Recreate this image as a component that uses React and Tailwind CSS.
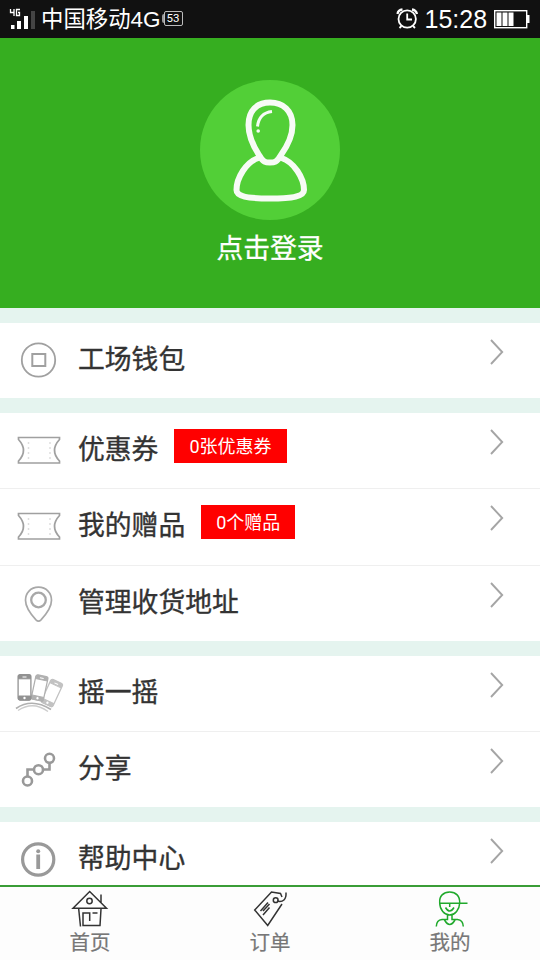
import React from "react";

const iconBox = "h-[75px] w-[78px] shrink-0";

const CoinIcon = () => (
  <svg className={iconBox} viewBox="0 0 78 75" fill="none" stroke="#a0a0a0">
    <circle cx="38.5" cy="37" r="16.7" strokeWidth="1.8" />
    <rect x="32.3" y="31" width="13" height="12" strokeWidth="2" />
  </svg>
);

const TicketIcon = () => (
  <svg className={iconBox} viewBox="0 0 78 75" fill="none" stroke="#a0a0a0">
    <path d="M18.5 24.5H59.5V26.5Q49.5 37.5 59.5 48V50H18.5V48Q28.5 37.5 18.5 26.5Z" strokeWidth="1.7" />
    <path d="M28.5 29V46M50 29V46" stroke="#dedede" strokeWidth="1.5" strokeDasharray="2 3" />
  </svg>
);

const PinIcon = () => (
  <svg className={iconBox} viewBox="0 0 78 75" fill="none" stroke="#a8a8a8">
    <path d="M38.5 21.2C30.5 21.2 25.5 27.2 25.5 34.2C25.5 41.5 32 49.5 36 53.8Q38.5 56.3 41 53.8C45 49.5 51.5 41.5 51.5 34.2C51.5 27.2 46.5 21.2 38.5 21.2Z" strokeWidth="1.7" />
    <circle cx="38.5" cy="34" r="7.3" strokeWidth="2.3" />
  </svg>
);

const Phone = () => (
  <>
    <rect x="0.6" y="0.6" width="12.8" height="25.4" rx="2" fill="#fff" strokeWidth="1.3" />
    <path d="M1 4.8V2Q1 1 2 1H12Q13 1 13 2V4.800ZM1 22H13V25Q13 26 12 26H2Q1 26 1 25Z" fill="currentColor" />
    <path d="M5 3H9" stroke="#fff" />
    <circle cx="7" cy="24" r="1.2" fill="#fff" stroke="none" />
  </>
);

const ShakeIcon = () => (
  <svg className={iconBox} viewBox="0 0 78 75" fill="none" stroke="currentColor">
    <g className="text-[#c2c2c2]" transform="translate(51.2 22) rotate(25)"><Phone /></g>
    <g className="text-[#b0b0b0]" transform="translate(35.8 17.8) rotate(12) scale(0.96 0.98)"><Phone /></g>
    <g className="text-[#929292]" transform="translate(17.5 18)"><Phone /></g>
    <path d="M16 52.5Q32 41.5 51 53.5" stroke="#b0b0b0" strokeWidth="1.7" />
    <path d="M18 54.5Q33 44.500 48 55.500" stroke="#ccc" strokeWidth="1.3" />
  </svg>
);

const ShareIcon = () => (
  <svg className={iconBox} viewBox="0 0 78 75" fill="none" stroke="#999" strokeWidth="2.6">
    <path d="M27.5 45V37.500H34M43 37.500H49.500V31" />
    <circle cx="27.5" cy="49" r="4.500" />
    <circle cx="38.500" cy="37.700" r="4.500" />
    <circle cx="49.500" cy="26.300" r="4.500" />
  </svg>
);

const InfoIcon = () => (
  <svg className={iconBox} viewBox="0 0 78 75" fill="none" stroke="#999">
    <circle cx="38.2" cy="37.5" r="15.6" strokeWidth="3.2" />
    <path d="M38.200 32.500V47" strokeWidth="3.800" />
    <circle cx="38.200" cy="29.300" r="2" fill="#999" stroke="none" />
  </svg>
);

const Chevron = () => (
  <svg className="ml-auto h-[75px] w-[52px] shrink-0" viewBox="0 0 52 75" fill="none" stroke="#a5a5a5" strokeWidth="1.9">
    <path d="M3 17L14.200 29L3 41" />
  </svg>
);

function Row({ icon, label, badge, divider }) {
  return (
    <div className={divider ? "h-[76.5px] border-b-[1.5px] border-[#efefef] bg-white" : "h-[75px] bg-white"}>
      <div className="flex">
        {icon}
        <span className="pt-[17px] text-[26.8px] leading-[40px] text-[#333] [-webkit-text-stroke:0.35px_#333]">{label}</span>
        {badge && (
          <span className="mt-4 ml-[16px] h-[34px] bg-[#ff0000] px-[15px] text-[18px] leading-[35px] text-white">{badge}</span>
        )}
        <Chevron />
      </div>
    </div>
  );
}

const tabIcon = "h-[38px] w-10 overflow-visible";

const HomeIcon = () => (
  <svg className={tabIcon} viewBox="0 0 40 38" fill="none" stroke="#333" strokeWidth="1.5">
    <path d="M3 21.300L19.700 4.500L36.500 21.300ZM31 7.500V15.500M8.700 22L10.500 39.500M31 22L30 38.500H13V26H19.700V34M22.500 26H27.500" />
    <circle cx="19.500" cy="14" r="2.700" />
  </svg>
);

const TagIcon = () => (
  <svg className={tabIcon} viewBox="0 0 40 38" fill="none" stroke="#333" strokeWidth="1.5">
    <path d="M32 17L17.700 38.500L4.700 23L21.500 5L30.500 6.500L32 10" />
    <circle cx="25.700" cy="13.200" r="2.400" />
    <path d="M27 14C33 15.500 36.500 12.500 36 5.500M18 15.500L10.500 24M19.500 20.500L13 28M19.500 17L13 24" />
  </svg>
);

const PersonIcon = () => (
  <svg className={tabIcon} viewBox="0 0 40 38" fill="none" stroke="#20a92c" strokeWidth="1.5">
    <path d="M9.700 16C9 9 13.500 5 19.700 5S30 9 29.700 16C29.500 22.500 25 28 19.700 28S9.800 22.500 9.700 16ZM9 16.300H37.500M19.700 17V20M15.500 20.500Q19.700 27.500 24 20.500M17.500 28V32.500H12Q6.500 33 6.300 39.500M22 28V32.500H27.500Q33 33 33.300 39.500M14.500 33Q19.700 42 25 33" />
  </svg>
);

function Tab({ icon, label }) {
  return (
    <div className="flex flex-1 flex-col items-center">
      {icon}
      <span className="mt-[3px] text-[20.5px] leading-[30px] text-[#777] [-webkit-text-stroke:0.2px_#777]">{label}</span>
    </div>
  );
}

const Gap = () => <div className="h-[15px]" />;

export default function App() {
  return (
    <div className="flex h-[960px] w-[540px] flex-col overflow-hidden bg-[#e5f4ef] font-[Roboto,'Noto_Sans_CJK_SC',sans-serif]">
      <header className="flex h-[37.5px] shrink-0 items-center bg-[#111] text-white">
        <svg className="h-[37px] w-[41px] shrink-0" viewBox="0 0 41 37" fill="none">
          <path d="M10.500 9V12.500H14M14 9V16M20 9.500H16.500V15.500H19.500V12.500H18" stroke="#fff" strokeWidth="1.3" />
          <path d="M11 25h3.500v4H11zM17 21h4v8H17zM24 16h4v13H24z" fill="#fff" />
          <path d="M31 11h4v18H31z" fill="#444" />
        </svg>
        <span className="pt-[2px] text-[22.400px] leading-[37px]">中国移动</span>
        <span className="w-[31px] pt-[2px] font-['Liberation_Sans',sans-serif] text-[22.500px] leading-[37px]">4G</span>
        <span className="h-[9px] w-[2px] rounded-l bg-[#999]" />
        <span className="flex h-[15px] w-[19px] items-center justify-center rounded-[2px] border border-[#bbb] text-[11.500px] leading-none">53</span>
        <svg className="ml-auto h-[37px] w-[26px]" viewBox="0 0 26 37" fill="none" stroke="#fff" strokeWidth="1.8">
          <circle cx="13.200" cy="19" r="8.700" />
          <path d="M13.200 13.500V19.500H18M7.500 26L5.500 28M19 26L21 28" />
          <path d="M3.500 14Q4 10 8.500 9.500M23 14Q22 10 18 9.500" strokeWidth="2.300" />
        </svg>
        <span className="ml-[4.5px] w-[67px] pt-[2px] font-['Liberation_Sans',sans-serif] text-[25px] leading-[37px]">15:28</span>
        <svg className="mr-[10.5px] h-[37px] w-[38px]" viewBox="0 0 38 37">
          <rect x="2.700" y="10.700" width="32" height="17" fill="none" stroke="#fff" strokeWidth="1.400" />
          <path d="M4.500 12.500h5v13.500h-5zM10.500 12.500h5v13.500h-5zM16.500 12.500h5v13.500h-5zM35 15h2.500v8H35z" fill="#fff" />
        </svg>
      </header>

      <section className="flex h-[270px] shrink-0 flex-col items-center bg-[#36ae20] pt-[42.5px]">
        <svg className="h-[140px] w-[140px]" viewBox="0 0 140 140" fill="none" stroke="#f7fbf6">
          <circle cx="70" cy="70" r="70" fill="#52cf37" stroke="none" />
          <path d="M58.500 78C46 82 36.500 98 36.500 110C36.500 116 47 118.500 70 118.500S104 116 104 110C104 98 94 82 81.500 78" strokeWidth="6" />
          <path d="M70 22.500C57 22.500 48.500 30.500 48.500 45C48.500 57 54.500 68 59 75C63 82.500 66 82.500 70 82.500S77 82.500 81 75C86 68 92.500 57 92.500 45C92.500 30.500 83 22.500 70 22.500Z" strokeWidth="6" />
          <path d="M72 31.500Q59 33 57.500 46.500" strokeWidth="3" />
          <circle cx="58.200" cy="51" r="1.800" fill="#f7fbf6" stroke="none" />
        </svg>
        <span className="mt-[9px] text-[26.8px] leading-[40px] text-white [-webkit-text-stroke:0.3px_#fff]">点击登录</span>
      </section>

      <main className="min-h-0 flex-1 overflow-hidden">
        <Gap />
        <Row icon={<CoinIcon />} label="工场钱包" />
        <Gap />
        <Row icon={<TicketIcon />} label="优惠券" badge="0张优惠券" divider />
        <Row icon={<TicketIcon />} label="我的赠品" badge="0个赠品" divider />
        <Row icon={<PinIcon />} label="管理收货地址" />
        <Gap />
        <Row icon={<ShakeIcon />} label="摇一摇" divider />
        <Row icon={<ShareIcon />} label="分享" />
        <Gap />
        <Row icon={<InfoIcon />} label="帮助中心" />
      </main>

      <nav className="flex h-[75px] shrink-0 border-t-2 border-[#3a9d37] bg-[#fdfdfd]">
        <Tab icon={<HomeIcon />} label="首页" />
        <Tab icon={<TagIcon />} label="订单" />
        <Tab icon={<PersonIcon />} label="我的" />
      </nav>
    </div>
  );
}
